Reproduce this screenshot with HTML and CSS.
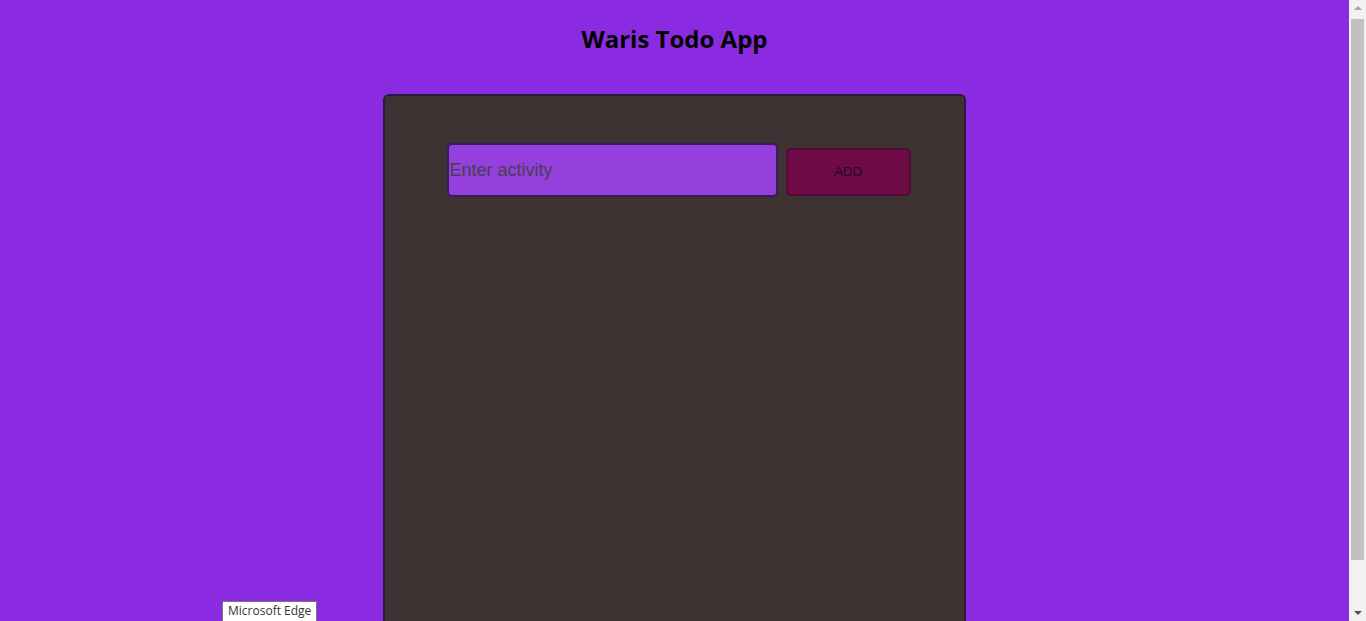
FILE: index.html
```html
<!DOCTYPE html>
<html lang="en">
<head>
<meta charset="UTF-8">
<meta name="viewport" content="width=device-width, initial-scale=1.0">
<title>Waris Todo App</title>
<link rel="stylesheet" href="styles.css">
</head>
<body>
<h1 class="title">Waris Todo App</h1>
<div class="container">
  <div class="input-row">
    <input type="text" id="activity" placeholder="Enter activity">
    <button class="add-btn">ADD</button>
  </div>
  <ul class="list"></ul>
</div>
<div class="tooltip">Microsoft Edge</div>
<div class="scrollbar">
  <span class="arrow up"></span>
  <span class="thumb"></span>
  <span class="arrow down"></span>
</div>
</body>
</html>
```

FILE: styles.css
```css
body {
  margin: 0;
  padding: 0 17px 0 0;
  background-color: #8a2be2;
  font-family: "Liberation Sans", Arial, sans-serif;
}
.title {
  margin: 0;
  padding-top: 23px;
  font-family: "Open Sans", "Noto Sans", sans-serif;
  font-size: 24px;
  line-height: 32px;
  font-weight: 700;
  text-align: center;
  color: #000;
}
.container {
  box-sizing: border-box;
  width: 583px;
  height: 620px;
  margin: 39px auto 0;
  background-color: #3e3232;
  border: 2px solid #2b1b3a;
  border-radius: 6px;
  padding-top: 47px;
}
.input-row {
  display: flex;
  justify-content: center;
  align-items: flex-start;
  gap: 8px;
  padding-left: 8px;
}
.input-row input {
  box-sizing: border-box;
  width: 331px;
  height: 54px;
  padding: 0 1px;
  background-color: #9340dd;
  border: 2px solid #3c1a5e;
  border-radius: 5px;
  font-family: "Liberation Sans", Arial, sans-serif;
  font-size: 18px;
  color: #222;
  outline: none;
}
.input-row input::placeholder {
  color: #4a3f52;
}
.add-btn {
  box-sizing: border-box;
  width: 125px;
  height: 48px;
  margin-top: 5px;
  padding: 0 0 2px;
  background-color: #6e0a46;
  border: 2px solid #4e0d36;
  border-radius: 5px;
  font-family: "Liberation Sans", Arial, sans-serif;
  font-size: 13.33px;
  color: #1f0a2e;
  cursor: pointer;
}
.list {
  margin: 0;
  padding: 0;
  list-style: none;
}
.tooltip {
  position: fixed;
  left: 222px;
  top: 601px;
  padding: 2px 5px 3px;
  background: #fff;
  border: 1px solid #767676;
  font-family: "Open Sans", sans-serif;
  font-size: 12px;
  line-height: 14px;
  color: #333;
}
.scrollbar {
  position: fixed;
  top: 0;
  right: 0;
  width: 17px;
  height: 100%;
  background: #f1f1f1;
  display: flex;
  flex-direction: column;
  align-items: center;
}
.arrow {
  width: 0;
  height: 0;
  border-left: 4px solid transparent;
  border-right: 4px solid transparent;
  margin: 6px 0;
}
.arrow.up {
  border-bottom: 4px solid #a3a3a3;
}
.arrow.down {
  border-top: 4px solid #505050;
  margin-top: auto;
}
.thumb {
  width: 13px;
  height: 541px;
  margin-top: 3px;
  background: #c1c1c1;
}
```
